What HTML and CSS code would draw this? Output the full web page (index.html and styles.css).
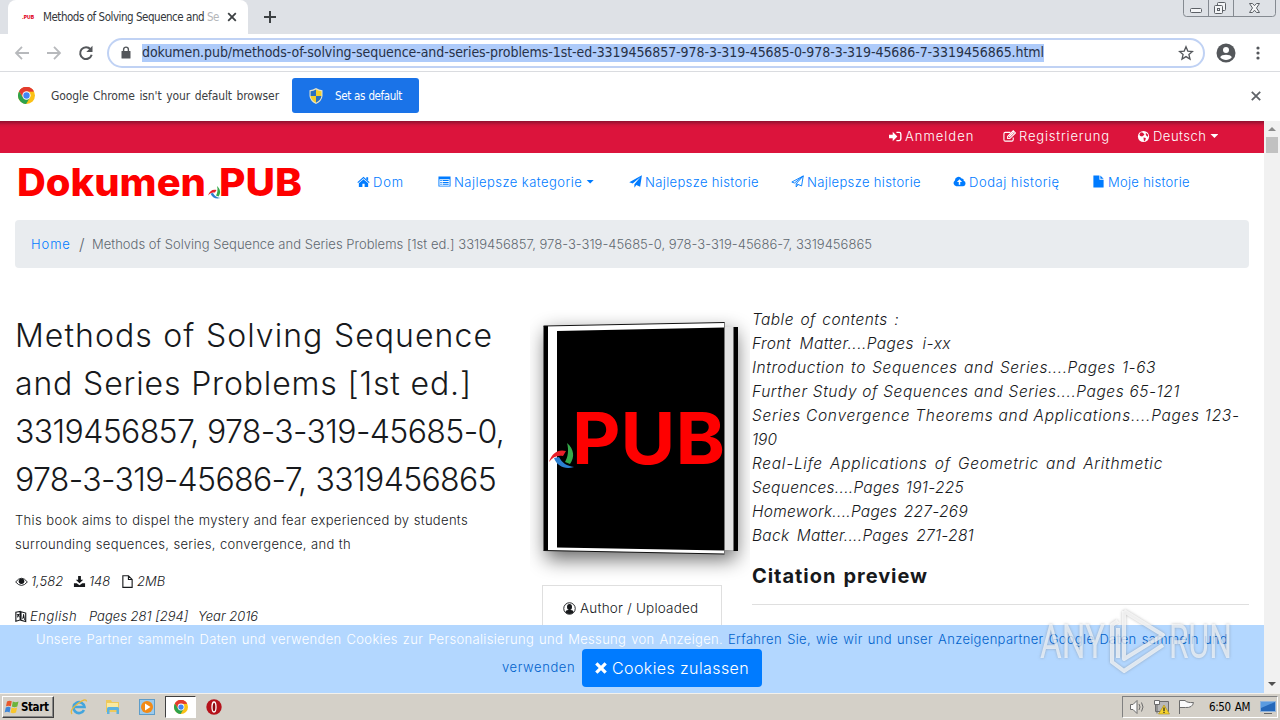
FILE: index.html
```html
<!DOCTYPE html>
<html lang="de">
<head>
<meta charset="utf-8">
<title>Methods of Solving Sequence and Series Problems</title>
<link rel="stylesheet" href="styles.css">
</head>
<body>
<svg width="0" height="0" class="defs">
  <defs>
    <symbol id="chrome" viewBox="0 0 16 16">
      <circle cx="8" cy="8" r="8" fill="#fbc116"/>
      <path d="M8 8 1.07 4A8 8 0 0 1 14.93 4L8 4.2z" fill="#e33b2e"/>
      <path d="M1.07 4A8 8 0 0 0 7.6 16L11.3 9.8 8 8 4.7 9.8z" fill="#2da24c"/>
      <path d="M1.07 4 4.7 9.8 5 6 8 4.2H14.93A8 8 0 0 0 1.07 4z" fill="#e33b2e"/>
      <circle cx="8" cy="8" r="3.9" fill="#fff"/>
      <circle cx="8" cy="8" r="3" fill="#4285f4"/>
    </symbol>
    <symbol id="plane" viewBox="0 0 14 14">
      <path d="M13.9.2 12 12.6 7.9 10.9 5.8 13.6V10L12.4 2.2 4 9.2.3 7.8z"/>
    </symbol>
    <symbol id="swirl" viewBox="0 0 26 26">
      <path d="M0 20C3 11 9 7 17 9L14 14C8 13 4 15 0 20z" fill="#e8202a"/>
      <path d="M18 1C25 7 26 15 21 22L16 20C19 15 20 8 18 1z" fill="#35a94a"/>
      <path d="M5 16L10 15C13 21 18 24 25 25C16 28 8 24 5 16z" fill="#2b7fd0"/>
    </symbol>
  </defs>
</svg>

<header class="tabs">
  <div class="tab">
    <span class="favicon">.PUB</span>
    <span class="tab-title fit">Methods of Solving Sequence and <i>Se</i></span>
    <svg class="tab-x" viewBox="0 0 10 10"><path d="M1.2 1.2 8.8 8.8M8.8 1.2 1.2 8.8"/></svg>
  </div>
  <svg class="plus" viewBox="0 0 12 12"><path d="M6 0V12M0 6H12"/></svg>
  <div class="win-buttons">
    <svg viewBox="0 0 93 17">
      <path d="M.5 0V13.5Q.5 16.5 3.5 16.5H89.500Q92.500 16.500 92.500 13.500V0M25.500 0V16.500M50.500 0V16.500" fill="none" stroke="#858a91"/>
      <g fill="#f4f5f7" stroke="#5c6066"><rect x="7.500" y="8.500" width="11" height="4" rx="1"/><rect x="34.500" y="2.500" width="8" height="8" rx="1"/><rect x="31.500" y="5.500" width="8" height="8" rx="1"/><rect x="34.500" y="8.500" width="2" height="2"/><path d="M66.500 3.500H69.500L71.500 5.700 73.500 3.500H76.500L73.500 8 76.500 12.500H73.500L71.500 10.200 69.500 12.500H66.500L69.500 8z"/></g>
    </svg>
  </div>
</header>

<div class="toolbar">
  <svg class="nav-icons" viewBox="0 0 84 16">
    <g fill="none" stroke="#b7b9bc" stroke-width="1.800"><path d="M15 8H2M8 1.800 2 8 8 14.200M33 8H46M40 1.800 46 8 40 14.200"/></g>
    <path d="M76.600 4.300A5.900 5.900 0 1 0 77.700 9.800" fill="none" stroke="#54575b" stroke-width="2"/><path d="M78.500.8V7H72.300z" fill="#54575b"/>
  </svg>
  <div class="omnibox">
    <svg class="lock" viewBox="0 0 10 13"><path d="M1 5H9Q9.500 5 9.500 5.500V12Q9.500 12.500 9 12.500H1Q.5 12.500.5 12V5.500Q.5 5 1 5z" fill="#54575b"/><path d="M2.600 5.500V3.500A2.400 2.400 0 0 1 7.400 3.500V5.500" fill="none" stroke="#54575b" stroke-width="1.400"/></svg>
    <span class="url">dokumen.pub/methods-of-solving-sequence-and-series-problems-1st-ed-3319456857-978-3-319-45685-0-978-3-319-45686-7-3319456865.html</span>
    <svg class="star" viewBox="0 0 16 16"><path d="M8 1.800 9.800 6.100 14.500 6.500 10.900 9.500 12 14.100 8 11.600 4 14.100 5.100 9.500 1.500 6.500 6.200 6.100z"/></svg>
  </div>
  <svg class="avatar" viewBox="0 0 20 20"><circle cx="10" cy="10" r="9.500" fill="#54575b"/><circle cx="10" cy="7" r="3" fill="#fff"/><path d="M4.200 14.200C5.500 11 14.500 11 15.800 14.200 13 17.800 7 17.800 4.200 14.200z" fill="#fff"/></svg>
  <svg class="dots" viewBox="0 0 4 14"><g fill="#54575b"><circle cx="2" cy="2" r="1.600"/><circle cx="2" cy="7" r="1.600"/><circle cx="2" cy="12" r="1.600"/></g></svg>
</div>

<div class="infobar">
  <svg class="chrome-logo"><use href="#chrome"/></svg>
  <span class="info-text fit">Google Chrome isn't your default browser</span>
  <div class="default-btn">
    <svg viewBox="0 0 14 16"><path d="M7 0Q10 2 13.500 2.200V8Q13 13 7 16 1 13 .5 8V2.200Q4 2 7 0z" fill="#e8e4c8"/><path d="M7 1.500V8H1.600V3.200Q4.500 3 7 1.500zM7 8H12.400Q12 12 7 14.700z" fill="#2a70c0"/><path d="M7 1.500Q9.500 3 12.400 3.200V8H7zM1.600 8H7V14.700Q2 12 1.600 8z" fill="#f3cf2b"/></svg>
    <span class="fit">Set as default</span>
  </div>
  <svg class="info-x" viewBox="0 0 10 10"><path d="M.8.8 9.200 9.200M9.200.8.8 9.200"/></svg>
</div>

<div class="viewport">
  <div class="site">
    <div class="topbar">
      <a class="t1"><svg viewBox="0 0 14 14"><path d="M0 5H4V2L9 7 4 12V9H0zM8 2H11Q13.500 2 13.500 4.500V9.500Q13.500 12 11 12H8V10.700H11Q12 10.700 12 9.500V4.500Q12 3.300 11 3.300H8z"/></svg><span>Anmelden</span></a>
      <a class="t2"><svg viewBox="0 0 14 14"><path d="M11 8V10.500Q11 12 9.500 12H2.500Q1 12 1 10.500V4Q1 2.500 2.500 2.500H8" fill="none" stroke="currentColor" stroke-width="1.200"/><path d="M5 6.800 11 .8 13.400 3.200 7.400 9.200H5z" fill="none" stroke="currentColor" stroke-width="1.200"/><path d="M6 7 11 2 12 3 7 8z"/></svg><span>Registrierung</span></a>
      <a class="t3"><svg viewBox="0 0 14 14"><circle cx="7" cy="7" r="6"/><path d="M4 2.500 6.500 3 8 5 5.500 7 3.500 6.500 2.500 5zM7 8 9.500 8.500 9 11 7.500 12.500zM9.500 3 12 5 11.500 7.500 9.500 5.500z" fill="#dc143c"/></svg><span>Deutsch</span><b class="caret"></b></a>
    </div>
    <nav class="menu">
      <svg class="logo" viewBox="0 0 290 44">
        <g fill="#fe0000" font-family="Inter, sans-serif" font-weight="800" font-size="38"><text x="2" y="35" textLength="189" lengthAdjust="spacingAndGlyphs">Dokumen</text><text x="204" y="35" textLength="83" lengthAdjust="spacingAndGlyphs">PUB</text></g>
        <use href="#swirl" x="193" y="24" width="13" height="14"/>
      </svg>
      <a class="m1"><svg viewBox="0 0 14 14"><path d="M7 2 13.600 7.800 12.800 8.700 7 3.600 1.200 8.700.4 7.800zM10 2.500H12V6L10 4.300zM7 4.600 12 9V13H8.200V9.500H5.800V13H2V9z"/></svg><span>Dom</span></a>
      <a class="m2"><svg viewBox="0 0 14 14"><path d="M.5 1.500H13.500V12.500H.5zM1.500 4.500V11.500H12.500V4.500z" fill-rule="evenodd"/><path d="M2.500 5.500H4V6.500H2.500zM5 5.500H11.500V6.500H5zM2.500 7.500H4V8.500H2.500zM5 7.500H11.500V8.500H5zM2.500 9.500H4V10.500H2.500zM5 9.500H11.500V10.500H5z"/></svg><span>Najlepsze kategorie</span><b class="caret"></b></a>
      <a class="m3"><svg><use href="#plane"/></svg><span>Najlepsze historie</span></a>
      <a class="m4"><svg viewBox="0 0 14 14"><path d="M13.200 1 11.400 11.800 7.600 10.200 5.600 12.900V9.400L13.200 1 3.800 8.600.9 7.600zM5.600 9.400 7.600 10.200" fill="none" stroke="currentColor"/></svg><span>Najlepsze historie</span></a>
      <a class="m5"><svg viewBox="0 0 14 14"><path d="M3.500 12A3.300 3.300 0 0 1 2 6 4 4 0 0 1 9.300 3.800 2 2 0 0 1 11.500 6.200 3 3 0 0 1 11 12zM6.200 10.500H7.800V7.500H9.800L7 4.600 4.200 7.500H6.200z" fill-rule="evenodd"/></svg><span>Dodaj historię</span></a>
      <a class="m6"><svg viewBox="0 0 14 14"><path d="M1.500.5H8V5H12.500V13.500H1.500zM9 .5 12.500 4H9z"/></svg><span>Moje historie</span></a>
    </nav>
    <div class="crumbs"><a>Home</a><em>/</em><span class="fit">Methods of Solving Sequence and Series Problems [1st ed.] 3319456857, 978-3-319-45685-0, 978-3-319-45686-7, 3319456865</span></div>
    <main class="cols">
      <section class="left">
        <h1><span class="fit h-a">Methods of Solving Sequence</span><span class="fit h-b">and Series Problems [1st ed.]</span><span class="fit h-c">3319456857, 978-3-319-45685-0,</span><span class="fit h-d">978-3-319-45686-7, 3319456865</span></h1>
        <p class="desc"><span class="fit d-a">This book aims to dispel the mystery and fear experienced by students</span><span class="fit d-b">surrounding sequences, series, convergence, and th</span></p>
        <div class="meta">
          <svg viewBox="0 0 14 14"><path d="M.7 7.500Q7-.5 13.300 7.500 7 15 .7 7.500z" fill="none" stroke="currentColor"/><circle cx="7" cy="6.800" r="3"/></svg><i class="s1">1,582</i>
          <svg viewBox="0 0 14 14"><path d="M5.500 1H8.500V5H11L7 9 3 5H5.500zM1 9H4L7 11 10 9H13V13H1z"/></svg><i class="s2">148</i>
          <svg viewBox="0 0 14 14"><path d="M2 .8H8L12 4.800V13.300H2zM8 .8V4.800H12" fill="none" stroke="currentColor" stroke-width="1.200"/></svg><i class="s3">2MB</i>
        </div>
        <div class="meta second">
          <svg viewBox="0 0 14 14"><path d="M1 2 6 1V11L1 12.500zM7 1.500 12.500 3V13L7 11.500z" fill="none" stroke="currentColor" stroke-width="1.300"/><path d="M2 4H5.500V5H4.500L5.500 8H4.500L3.800 6.500 2.500 9V7.500L3 5H2zM8.500 10 9.700 4H10.500L11.700 11H10.700L10.500 9H9.500L9.300 10.300z"/></svg><i class="s4">English</i><i class="s5 fit">Pages 281 [294]</i><i class="s6 fit">Year 2016</i>
        </div>
      </section>
      <section class="mid">
        <svg class="book" viewBox="0 0 220 285">
          <defs><filter id="soft" x="-20%" y="-20%" width="140%" height="140%"><feGaussianBlur stdDeviation="10"/></filter></defs>
          <rect x="16" y="32" width="190" height="227" fill="#000" opacity=".6" filter="url(#soft)"/>
          <path d="M193 27H208V250H193z" fill="#e3e3e3"/><path d="M203.500 27H208V251H203.500z" fill="#000"/>
          <path d="M13.500 26H18V250.500H13.500z" fill="#000"/>
          <path d="M18 25.500 194 22V254L18 250.500z" fill="#fff"/>
          <path d="M13.500 26 194.500 22.500V254L13.500 250.500" fill="none" stroke="#111"/>
          <path d="M27 31 194 27.500V250.500L27 247.500z" fill="#000"/>
          <text x="42" y="164" textLength="153" lengthAdjust="spacingAndGlyphs" fill="#fe0000" font-family="Inter, sans-serif" font-weight="700" font-size="71">PUB</text>
          <use href="#swirl" x="19" y="142" width="26" height="26"/>
          <path d="M194.500 22.500V254" stroke="#777"/>
        </svg>
        <div class="author"><svg viewBox="0 0 14 14"><circle cx="7" cy="7" r="6.200" fill="none" stroke="currentColor"/><ellipse cx="7" cy="5.500" rx="2.700" ry="3.300"/><path d="M2.500 11Q3 8.500 5.500 8.500H8.500Q11 8.500 11.500 11 7 15 2.500 11z"/></svg><span class="fit">Author / Uploaded</span></div>
      </section>
      <section class="right">
        <div class="toc">
          <span class="fit r0">Table of contents :</span><span class="fit r1">Front Matter....Pages i-xx</span><span class="fit r2">Introduction to Sequences and Series....Pages 1-63</span><span class="fit r3">Further Study of Sequences and Series....Pages 65-121</span><span class="fit r4">Series Convergence Theorems and Applications....Pages 123-</span><span class="r5">190</span><span class="fit r6">Real-Life Applications of Geometric and Arithmetic</span><span class="fit r7">Sequences....Pages 191-225</span><span class="fit r8">Homework....Pages 227-269</span><span class="fit r9">Back Matter....Pages 271-281</span>
        </div>
        <h2 class="fit">Citation preview</h2>
        <hr>
      </section>
    </main>
    <div class="cookie">
      <div class="c-row"><span class="fit c-a">Unsere Partner sammeln Daten und verwenden Cookies zur Personalisierung und Messung von Anzeigen.</span><a class="fit c-b">Erfahren Sie, wie wir und unser Anzeigenpartner Google Daten sammeln und</a></div>
      <div class="c-row2"><a>verwenden</a><span class="allow"><svg viewBox="0 0 12 12"><path d="M3 1 6 4 9 1 11 3 8 6 11 9 9 11 6 8 3 11 1 9 4 6 1 3z"/></svg><b class="fit">Cookies zulassen</b></span></div>
    </div>
  </div>
  <div class="scroll">
    <svg viewBox="0 0 16 16"><path d="M4 10 8 6 12 10z" fill="#8b8b8b"/></svg>
    <div class="thumb"></div>
    <svg class="down" viewBox="0 0 16 16"><path d="M4 5H12L8 9z" fill="#505050"/></svg>
  </div>
</div>

<footer class="taskbar">
  <div class="start"><svg viewBox="0 0 16 16"><path d="M3 2.500Q5.500 1 7.800 2.300L6.800 7.300Q4.500 6 2 7.300z" fill="#e8582a"/><path d="M8.800 2.500Q11.500 4 14.500 2.500L13.300 7.500Q10.500 9 7.900 7.500z" fill="#6cb43c"/><path d="M1.800 8.500Q4.500 7 6.600 8.400L5.600 13.400Q3 12 .7 13.400z" fill="#3e86d8"/><path d="M7.600 8.600Q10.500 10 13.100 8.600L12 13.500Q9 15 6.600 13.600z" fill="#f8c62c"/></svg><b>Start</b></div>
  <svg class="app" viewBox="0 0 18 18"><path d="M14 12A5.500 5.500 0 1 1 14.500 9H5" fill="none" stroke="#43a5dd" stroke-width="2.600"/><path d="M2 16Q-1 12 8 5.500 16-.5 16.500 3.500" fill="none" stroke="#e9b93d" stroke-width="1.300"/></svg>
  <svg class="app" viewBox="0 0 18 18"><path d="M2 2H7L8 4H15V14H2z" fill="#eec95b"/><path d="M3 5H14V12H3z" fill="#fae9a0"/><path d="M3 16V10.500Q3 9 4.500 9H13.500Q15 9 15 10.500V16H12.500V12H5.500V16z" fill="#5cb2e0"/></svg>
  <svg class="app" viewBox="0 0 18 18"><rect x="1.500" y="1.500" width="15" height="15" fill="#9ccaec" stroke="#5e9dc9"/><circle cx="9" cy="9" r="6" fill="#f28a16"/><path d="M7 5.500 12.500 9 7 12.500z" fill="#fff"/></svg>
  <div class="active"><svg><use href="#chrome"/></svg></div>
  <svg class="app" viewBox="0 0 18 18"><circle cx="9" cy="9" r="7.700" fill="#b5121b"/><ellipse cx="9" cy="9" rx="2" ry="5" fill="#8e0810" stroke="#fff" stroke-width="1.300"/></svg>
  <div class="tray">
    <svg viewBox="0 0 74 18"><g fill="#fafafa" stroke="#6c6c6c"><path d="M4.500 6.500H7L11 2.500V15.500L7 11.500H4.500z"/><path d="M13 6Q15 9 13 12M15.500 4.500Q18.500 9 15.500 13.500" fill="none"/><path d="M29.500 3.500H42.500V13.500H29.500z" fill="#b8b8b8"/><path d="M28.500 2.500H33.500V6.500H28.500zM31 7V15.500" /><path d="M53.500 16V2.500H59Q61 5 67.500 4.500 66.500 10 59.500 9.500H53.500"/></g><path d="M38 7 43.500 16H32.500z" fill="#f6d32c" stroke="#a88912" stroke-width=".6"/><path d="M38 9.500V13M38 13.800V15" stroke="#222" stroke-width="1.200"/></svg>
    <span class="fit">6:50 AM</span>
    <svg class="desk" viewBox="0 0 16 16"><path d="M.5 2.500H15.500V12.500H.5z" fill="#2568ba" stroke="#8fb3dc"/><path d="M1 3H15L1 9z" fill="#5a9be0"/><path d="M4 14.500H12" stroke="#666"/></svg>
  </div>
</footer>

<svg class="watermark" viewBox="0 0 200 70">
  <g fill="#fff" fill-opacity=".65" font-family="Roboto, sans-serif" font-weight="400" font-size="48"><text x="2" y="54" textLength="65" lengthAdjust="spacingAndGlyphs">ANY</text><text x="131" y="54" textLength="63" lengthAdjust="spacingAndGlyphs">RUN</text></g>
  <g fill="none" stroke="#fff" stroke-opacity=".7" stroke-width="4" stroke-linejoin="round"><path d="M86 7 125 31 86 55V7"/><path d="M80 17 74 21V58L86 67 125 41"/><path d="M80 24V54"/></g>
</svg>
</body>
</html>
```

FILE: styles.css
```css
* { box-sizing: border-box; }
body { margin: 0; width: 1280px; height: 720px; overflow: hidden; position: relative; background: #fff; color: #17191c; font-family: Inter, sans-serif; font-weight: 300; display: flex; flex-direction: column; }
svg { display: block; flex: none; }
.defs { position: absolute; }
.fit { display: block; white-space: nowrap; text-align-last: justify; flex: none; }

.tabs, .toolbar, .infobar, .taskbar { font-family: "DejaVu Sans Condensed", "DejaVu Sans", sans-serif; font-stretch: condensed; font-weight: 400; flex: none; }
.tabs { height: 34px; background: #dee1e6; display: flex; align-items: flex-start; }
.tab { margin-left: 8px; width: 240px; height: 34px; background: #fff; border-radius: 8px 8px 0 0; display: flex; align-items: center; padding-left: 14px; }
.favicon { width: 21px; font: 800 5px Inter, sans-serif; color: #e00020; }
.tab-title { width: 176px; font-size: 11.500px; letter-spacing: -.48px; color: #33363a; }
.tab-title i { font-style: normal; color: #b4b6b9; }
.tab-x { width: 10px; height: 10px; margin-left: 8px; fill: none; stroke: #3c4043; stroke-width: 1.800; }
.plus { width: 12px; height: 12px; margin: 11px 0 0 16px; fill: none; stroke: #3c4043; stroke-width: 2; }
.win-buttons { margin-left: auto; width: 97px; }
.win-buttons svg { width: 93px; height: 17px; }

.toolbar { height: 38px; display: flex; align-items: center; border-bottom: 1px solid #dadce0; }
.nav-icons { width: 84px; height: 16px; margin-left: 14px; }
.omnibox { width: 1098px; height: 30px; margin-left: 9px; border: 2px solid #c0d2f4; border-radius: 15px; display: flex; align-items: center; padding-left: 12px; }
.lock { width: 10px; height: 13px; margin-right: 11px; }
.url { width: 902px; height: 18px; line-height: 17px; background: #aecbfa; font-size: 14px; letter-spacing: -.063px; white-space: nowrap; color: #263147; }
.star { width: 16px; height: 16px; margin-left: 134px; fill: none; stroke: #54575b; stroke-width: 1.300; }
.avatar { width: 20px; height: 20px; margin-left: 11px; }
.dots { width: 4px; height: 14px; margin-left: 20px; }

.infobar { height: 49px; display: flex; align-items: center; padding-bottom: 2px; }
.chrome-logo { width: 17px; height: 17px; margin: 0 16px 0 18px; }
.info-text { width: 228px; font-size: 12px; letter-spacing: -.1px; color: #3c4043; }
.default-btn { width: 127px; height: 35px; margin-left: 13px; background: #1a73e8; border-radius: 3px; display: flex; align-items: center; color: #fff; padding-left: 17px; font-size: 11.500px; }
.default-btn svg { width: 14px; height: 16px; }
.default-btn span { width: 67px; margin-left: 12px; letter-spacing: -.4px; }
.info-x { width: 10px; height: 10px; margin-left: 832px; fill: none; stroke: #5f6368; stroke-width: 1.800; }

.viewport { height: 572px; display: flex; flex: none; }
.site { width: 1264px; height: 572px; overflow: hidden; position: relative; }
.topbar { height: 32px; background: linear-gradient(#8f1230, #cf153b 4px, #dc143c 7px); color: #fff; display: flex; align-items: center; }
.topbar a, .menu a { display: flex; align-items: center; white-space: nowrap; font-size: 13px; flex: none; }
.topbar svg, .menu a svg { width: 13px; height: 13px; fill: currentColor; margin-right: 3px; }
.topbar a { padding-bottom: 2px; }
.t1 { margin-left: 889px; width: 114px; letter-spacing: 1px; }
.t2 { width: 134px; letter-spacing: .82px; }
.t3 { letter-spacing: .5px; }
.caret { width: 8px; height: 4px; margin-left: 4px; background: currentColor; clip-path: polygon(0 0, 100% 0, 50% 100%); }
.menu { height: 67px; display: flex; align-items: center; color: #007bff; padding-bottom: 10px; }
.menu .logo { width: 290px; height: 44px; margin-left: 15px; margin-top: 3px; overflow: visible; }
.m1 { margin-left: 52px; width: 81px; letter-spacing: .8px; }
.m2 { width: 191px; letter-spacing: .46px; }
.m3, .m4 { width: 162px; letter-spacing: .36px; }
.m5 { width: 139px; letter-spacing: .55px; }
.m6 { letter-spacing: .3px; }
.crumbs { width: 1234px; height: 48px; margin-left: 15px; background: #e9ecef; border-radius: 4px; display: flex; align-items: center; padding-left: 16px; font-size: 13px; color: #5f6870; }
.crumbs a { color: #007bff; width: 48px; letter-spacing: .9px; }
.crumbs em { font-style: normal; font-size: 16px; width: 13px; }
.crumbs span { width: 776px; letter-spacing: .02px; }

.cols { display: flex; margin-top: 39px; }
.left { width: 542px; padding: 4px 0 0 15px; flex: none; }
h1 { margin: 0; font-weight: 300; font-size: 32px; line-height: 49px; height: 193px; line-height: 48px; padding-top: 1px; }
.h-a { width: 478px; letter-spacing: 1.050px; }
.h-b { width: 454px; letter-spacing: .85px; }
.h-c { width: 489px; letter-spacing: -.62px; }
.h-d { width: 481px; letter-spacing: -.64px; }
.desc { margin: 4px 0 0; font-size: 13px; line-height: 24px; }
.d-a { width: 453px; letter-spacing: .33px; }
.d-b { width: 336px; letter-spacing: .33px; }
.meta { display: flex; align-items: center; height: 24px; margin-top: 13px; font-size: 13px; }
.meta svg { width: 13px; height: 13px; margin-right: 3px; fill: currentColor; }
.second { margin-top: 11px; }
.second svg { width: 12px; }
.s1 { width: 42px; }
.s2 { width: 32px; }
.s4 { width: 59px; letter-spacing: .5px; }
.s5 { width: 98px; margin-right: 11px; }
.s6 { width: 60px; }
.mid { width: 210px; flex: none; }
.book { width: 220px; height: 285px; margin: -7px 0 0 -12px; }
.author { width: 180px; height: 45px; border: 1px solid #dfdfdf; border-bottom: 0; display: flex; align-items: center; padding-left: 20px; font-size: 13.500px; }
.author svg { width: 13px; height: 13px; fill: currentColor; margin-right: 4px; }
.author span { width: 118px; letter-spacing: .2px; }
.right { width: 497px; }
.toc { font-size: 15.500px; line-height: 24px; font-style: italic; padding-top: 1px; }
.toc span { display: block; letter-spacing: .55px; }
.toc .r0, .toc .r1 { letter-spacing: .42px; }
.r0 { width: 147px; }
.r1 { width: 199px; }
.r2 { width: 404px; }
.r3 { width: 428px; }
.toc .r4, .toc .r6 { letter-spacing: .7px; }
.r4 { width: 485px; }
.r6 { width: 411px; }
.toc .r7, .toc .r8, .toc .r9 { letter-spacing: .27px; }
.toc .r5 { letter-spacing: 0; }
.r7 { width: 212px; }
.r8 { width: 216px; }
.r9 { width: 222px; }
h2 { margin: 13px 0 0; width: 176px; font-size: 20px; line-height: 30px; font-weight: 700; letter-spacing: .95px; }
hr { margin: 13px 0 0; border: 0; border-top: 1px solid #dfdfdf; }

.cookie { position: absolute; left: 0; bottom: 0; width: 1264px; height: 68px; background: #b3d7ff; font-size: 13px; }
.cookie a { color: #0062cc; }
.c-row { display: flex; height: 24px; align-items: center; padding: 4px 0 0 36px; }
.c-a { width: 687px; color: #fff; letter-spacing: .33px; }
.c-b { width: 500px; margin-left: 5px; letter-spacing: .33px; }
.c-row2 { display: flex; align-items: center; padding-left: 502px; }
.c-row2 a { width: 80px; letter-spacing: .6px; padding-bottom: 3px; }
.allow { width: 180px; height: 38px; background: #007bff; border-radius: 4px; display: flex; align-items: center; color: #fff; font-size: 16px; padding-left: 12px; }
.allow svg { width: 14px; height: 14px; fill: #fff; margin-right: 4px; }
.allow b { width: 136px; font-weight: 300; letter-spacing: .4px; }

.scroll { width: 16px; background: #f1f1f1; display: flex; flex-direction: column; }
.scroll svg { width: 16px; height: 16px; }
.thumb { width: 12px; height: 16px; margin-left: 2px; background: #c1c1c1; }
.scroll .down { margin-top: auto; }

.taskbar { height: 27px; background: #d4d0c8; border-top: 1px solid #f3f1ec; display: flex; align-items: center; color: #000; }
.start { width: 52px; height: 22px; margin-left: 2px; border: 1px solid; border-color: #fff #404040 #404040 #fff; box-shadow: inset -1px -1px #888; display: flex; align-items: center; padding-left: 1px; font-size: 11.500px; letter-spacing: -.4px; }
.start svg { width: 16px; height: 16px; margin-right: 1px; }
.app { width: 18px; height: 18px; margin-left: 16px; }
.active { width: 31px; height: 22px; margin-left: 9px; margin-right: -7px; background: #fff; border: 1px solid; border-color: #404040 #fff #fff #404040; display: flex; align-items: center; justify-content: center; }
.active svg { width: 14px; height: 14px; }
.tray { width: 156px; height: 22px; margin-left: auto; margin-right: 2px; border: 1px solid; border-color: #808080 #fff #fff #808080; display: flex; align-items: center; padding-left: 3px; font-size: 11.500px; }
.tray svg { width: 74px; height: 18px; }
.tray span { width: 41px; margin-left: 9px; letter-spacing: -.4px; }
.tray .desk { width: 16px; height: 16px; margin-left: 10px; }

.watermark { position: absolute; left: 1038px; top: 604px; width: 200px; height: 70px; overflow: visible; filter: drop-shadow(0 0 1.500px rgba(90, 90, 90, .55)); }
```
